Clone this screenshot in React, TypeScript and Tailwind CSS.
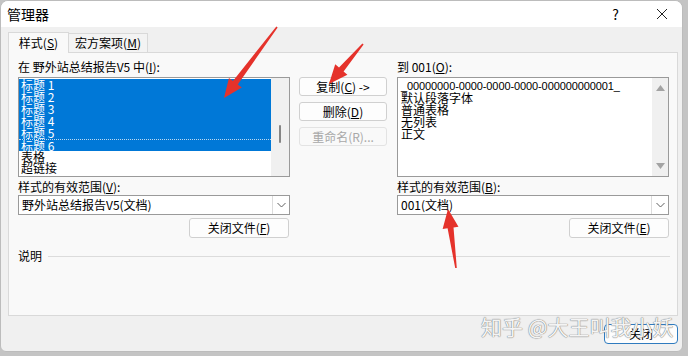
import React from "react";

const Arrow = ({ tx, ty, hx, hy }: { tx: number; ty: number; hx: number; hy: number }) => {
  const dx = hx - tx;
  const dy = hy - ty;
  const len = Math.sqrt(dx * dx + dy * dy);
  const ux = dx / len;
  const uy = dy / len;
  const px = -uy;
  const py = ux;
  const headLen = 19;
  const bx = hx - ux * headLen;
  const by = hy - uy * headLen;
  const pt = (x: number, y: number, w: number) => `${x + px * w},${y + py * w}`;
  const points = [
    pt(tx, ty, 0.8),
    pt(bx, by, 3),
    pt(bx, by, 8),
    `${hx},${hy}`,
    pt(bx, by, -8),
    pt(bx, by, -3),
    pt(tx, ty, -0.8),
  ].join(" ");
  return <polygon points={points} fill="#e5322b" />;
};

const Btn = ({ children, disabled, className = "" }: { children: React.ReactNode; disabled?: boolean; className?: string }) => (
  <div
    className={`h-[19px] rounded-[3px] border flex items-center justify-center text-[12px] leading-[12px] ${
      disabled ? "border-[#e3e3e3] bg-[#f9f9f9] text-[#a8a8a8]" : "border-[#d0d0d0] bg-[#fdfdfd] text-black"
    } ${className}`}
  >
    {children}
  </div>
);

const Combo = ({ text }: { text: string }) => (
  <div className="h-[20px] border border-[#9a9a9a] bg-white flex">
    <div className="flex-1 pl-[3px] flex items-center text-[12px] leading-[12px]">{text}</div>
    <div className="w-[17px] border-l border-[#dcdcdc] flex items-center justify-center">
      <svg width="9" height="6" viewBox="0 0 9 6">
        <path d="M0.5 1 L4.5 5 L8.5 1" fill="none" stroke="#606060" strokeWidth="1" />
      </svg>
    </div>
  </div>
);

export default function App() {
  const leftSel = ["标题 1", "标题 2", "标题 3", "标题 4", "标题 5", "标题 6"];
  const rightItems = ["默认段落字体", "普通表格", "无列表", "正文"];

  return (
    <div className="w-[688px] h-[356px] bg-[#c4c4c4] relative overflow-hidden font-['Noto_Sans_CJK_SC',sans-serif] text-black">
      <div className="w-[683px] h-[352px] bg-[#f0f0f0] rounded-t-lg rounded-b-md border border-[#bcbcbc] flex flex-col overflow-hidden">
        {/* Title bar */}
        <div className="h-[26px] bg-white flex items-center pl-[6px] shrink-0">
          <span className="text-[14px] leading-[14px]">管理器</span>
          <span className="ml-auto mr-[37px] text-[14px] leading-[14px]">?</span>
          <svg className="mr-[14px]" width="12" height="12" viewBox="0 0 12 12">
            <path d="M1 1 L11 11 M11 1 L1 11" stroke="#222" strokeWidth="1" />
          </svg>
        </div>

        <div className="px-[7px] pt-[4px] pr-[4px]">
          {/* Tabs */}
          <div className="flex items-end h-[21px]">
            <div className="h-[21px] w-[61px] border border-b-0 border-[#d9d9d9] bg-[#f9f9f9] flex items-center justify-center text-[12px] leading-[12px] relative z-10 -mb-px">
              样式(<u>S</u>)
            </div>
            <div className="h-[19px] w-[79px] border border-b-0 border-l-0 border-[#d9d9d9] bg-[#f3f3f3] flex items-center justify-center text-[12px] leading-[12px]">
              宏方案项(<u>M</u>)
            </div>
          </div>

          {/* Panel */}
          <div className="h-[264px] border border-[#d9d9d9] bg-[#f9f9f9] pl-[9px] pt-[7px]">
            <div className="flex">
              {/* Left column */}
              <div className="w-[272px] flex flex-col">
                <div className="h-[14px] text-[12px] leading-[14px]">在 野外站总结报告V5 中(<u>I</u>):</div>
                <div className="mt-[3px] h-[100px] border border-[#9a9a9a] bg-white flex">
                  <div className="flex-1 pt-px">
                    {leftSel.map((t, i) => (
                      <div
                        key={t}
                        className={`h-[12px] bg-[#0078d7] text-white pl-[2px] text-[12px] leading-[12px] ${
                          i === 5 ? "border-t border-dotted border-[#bcd8f0]" : ""
                        }`}
                      >
                        {t}
                      </div>
                    ))}
                    <div className="h-[11px] pl-[2px] text-[12px] leading-[12px]">表格</div>
                    <div className="h-[12px] pl-[2px] text-[12px] leading-[12px]">超链接</div>
                  </div>
                  <div className="w-[18px] bg-[#f0f0f0] flex justify-center pt-[47px]">
                    <div className="w-[2px] h-[18px] bg-[#858585] rounded-full" />
                  </div>
                </div>
                <div className="mt-[3px] h-[14px] text-[12px] leading-[14px]">样式的有效范围(<u>V</u>):</div>
                <div className="mt-px">
                  <Combo text="野外站总结报告V5(文档)" />
                </div>
                <div className="mt-[3px] flex justify-end pr-px">
                  <Btn className="w-[100px] h-[20px]">
                    关闭文件(<u>F</u>)
                  </Btn>
                </div>
              </div>

              {/* Middle buttons */}
              <div className="w-[88px] ml-[9px] pt-[17px] flex flex-col gap-[6px]">
                <Btn>
                  复制(<u>C</u>) -&gt;
                </Btn>
                <Btn>
                  删除(<u>D</u>)
                </Btn>
                <Btn disabled>重命名(R)...</Btn>
              </div>

              {/* Right column */}
              <div className="w-[272px] ml-[10px] flex flex-col">
                <div className="h-[14px] text-[12px] leading-[14px]">到 001(<u>O</u>):</div>
                <div className="mt-[3px] h-[100px] border border-[#9a9a9a] bg-white flex">
                  <div className="flex-1 pl-[3px] pt-[3px]">
                    <div className="h-[11px] text-[11px] leading-[11px] font-['Liberation_Sans',sans-serif] tracking-[-0.1px]">
                      _00000000-0000-0000-0000-000000000001_
                    </div>
                    {rightItems.map((t) => (
                      <div key={t} className="h-[12px] text-[12px] leading-[12px]">
                        {t}
                      </div>
                    ))}
                  </div>
                  <div className="w-[16px] bg-[#f0f0f0] flex flex-col items-center justify-between py-[7px]">
                    <svg width="9" height="6" viewBox="0 0 9 6">
                      <path d="M0 6 L4.5 0 L9 6 Z" fill="#a3a3a3" />
                    </svg>
                    <svg width="9" height="6" viewBox="0 0 9 6">
                      <path d="M0 0 L4.5 6 L9 0 Z" fill="#a3a3a3" />
                    </svg>
                  </div>
                </div>
                <div className="mt-[3px] h-[14px] text-[12px] leading-[14px]">样式的有效范围(<u>B</u>):</div>
                <div className="mt-px">
                  <Combo text="001(文档)" />
                </div>
                <div className="mt-[3px] flex justify-end">
                  <Btn className="w-[100px] h-[20px]">
                    关闭文件(<u>E</u>)
                  </Btn>
                </div>
              </div>
            </div>

            {/* 说明 */}
            <div className="mt-[11px] h-[14px] flex items-center pr-[7px]">
              <span className="text-[12px] leading-[14px]">说明</span>
              <div className="flex-1 ml-[6px] h-px bg-[#dcdcdc]" />
            </div>
          </div>

          {/* Footer */}
          <div className="flex justify-end pt-[8px]">
            <div className="w-[74px] h-[20px] rounded-[4px] border border-[#2f7bbf] bg-[#fdfdfd] flex items-center justify-center text-[12px] leading-[12px]">
              关闭
            </div>
          </div>
        </div>
      </div>

      {/* Watermark */}
      <div className="absolute left-[481px] top-[314px] text-[21px] leading-[24px] text-[#f4f4f4] [text-shadow:0_0_1px_#777,0_0_1px_#777] whitespace-nowrap">
        知乎 @大王叫我小妖
      </div>

      {/* Annotation arrows */}
      <svg className="absolute inset-0 pointer-events-none" width="688" height="356">
        <Arrow tx={277} ty={27} hx={224} hy={98} />
        <Arrow tx={363} ty={44} hx={329} hy={84} />
        <Arrow tx={456} ty={268} hx={448} hy={209} />
      </svg>
    </div>
  );
}
